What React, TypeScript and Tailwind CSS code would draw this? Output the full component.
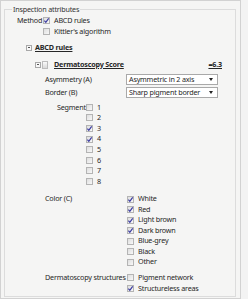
import React from "react";

const Check = ({ checked }: { checked?: boolean }) => (
  <span className="relative inline-block w-[7px] h-[7px] shrink-0 border border-[#b4b4b4] bg-gradient-to-br from-[#dedede] to-[#f8f8f8]">
    {checked && (
      <svg viewBox="0 0 7 7" className="absolute -left-[1px] -top-[1px] w-[7px] h-[7px]">
        <path d="M1.4 3.7 L2.8 5.3 L5.7 1.3" fill="none" stroke="#3a3aa0" strokeWidth="1.2" />
      </svg>
    )}
  </span>
);

const Expander = () => (
  <span className="relative inline-flex items-center justify-center w-[6px] h-[6px] border border-[#a8a8a8] bg-[#f7f7f7] shrink-0">
    <span className="block w-[2px] h-px bg-[#555]" />
  </span>
);

const CheckRow = ({ checked, label, h = "h-[10.5px]" }: { checked?: boolean; label: string; h?: string }) => (
  <div className={`flex items-center gap-[4px] ${h}`}>
    <Check checked={checked} />
    <span className="leading-none whitespace-nowrap">{label}</span>
  </div>
);

const Dropdown = ({ text }: { text: string }) => (
  <div className="flex items-center justify-between w-[92px] h-[11px] border border-[#a9a9a9] bg-white pl-[2px] pr-[4px]">
    <span className="leading-none whitespace-nowrap">{text}</span>
    <span className="block w-0 h-0 border-l-[2.5px] border-r-[2.5px] border-t-[3px] border-l-transparent border-r-transparent border-t-[#222]" />
  </div>
);

export default function App() {
  const segs = [
    { l: "1", c: false },
    { l: "2", c: false },
    { l: "3", c: true },
    { l: "4", c: true },
    { l: "5", c: false },
    { l: "6", c: false },
    { l: "7", c: false },
    { l: "8", c: false },
  ];
  const colors = [
    { l: "White", c: true },
    { l: "Red", c: true },
    { l: "Light brown", c: true },
    { l: "Dark brown", c: true },
    { l: "Blue-grey", c: false },
    { l: "Black", c: false },
    { l: "Other", c: false },
  ];
  return (
    <div
      className="w-[248px] h-[299px] overflow-hidden bg-[#f5f5f4] text-[#262626] text-[7.2px] tracking-[-0.2px] flex"
      style={{ fontFamily: '"Noto Sans", "Open Sans", sans-serif' }}
    >
      <div className="w-[241px] h-[299px] border border-[#d2d2d2] pl-[3px] pt-[2px]">
        <fieldset className="w-[232px] h-[294px] border border-[#dcdcdc] m-0 p-0 min-w-0">
          <legend className="ml-[7px] px-[1px] leading-[12px] text-[#333]">Inspection attributes</legend>

          <div className="flex pl-[12px]">
            <span className="w-[26px] h-[11px] flex items-center leading-none whitespace-nowrap">Method</span>
            <div className="flex flex-col">
              <CheckRow checked label="ABCD rules" h="h-[11px]" />
              <CheckRow label="Kittler's algorithm" h="h-[11px]" />
            </div>
          </div>

          <div className="flex items-center gap-[3px] pl-[21px] mt-[5px] h-[11px]">
            <Expander />
            <span className="font-bold underline leading-none">ABCD rules</span>
          </div>

          <div className="flex items-center pl-[30px] mt-[6px] h-[11px] w-[217px]">
            <Expander />
            <span className="ml-[1px] inline-block w-[6px] h-[8px] border border-[#bcbcbc] bg-gradient-to-b from-[#fafafa] to-[#d9d9d9]" />
            <span className="ml-[6px] font-bold underline leading-none">Dermatoscopy Score</span>
            <span className="ml-auto font-bold underline leading-none">=6.3</span>
          </div>

          <div className="pl-[40px] mt-[4px] flex flex-col gap-[2px]">
            <div className="flex items-center h-[11px]">
              <span className="w-[81px] leading-none">Asymmetry (A)</span>
              <Dropdown text="Asymmetric in 2 axis" />
            </div>
            <div className="flex items-center h-[11px]">
              <span className="w-[81px] leading-none">Border (B)</span>
              <Dropdown text="Sharp pigment border" />
            </div>
          </div>

          <div className="flex pl-[52px] mt-[4px]">
            <span className="w-[29px] h-[10.6px] flex items-center leading-none whitespace-nowrap">Segment</span>
            <div className="flex flex-col">
              {segs.map((s) => (
                <CheckRow key={s.l} checked={s.c} label={s.l} h="h-[10.6px]" />
              ))}
            </div>
          </div>

          <div className="flex pl-[40px] mt-[7px]">
            <span className="w-[82px] h-[10.5px] flex items-center leading-none">Color (C)</span>
            <div className="flex flex-col">
              {colors.map((s) => (
                <CheckRow key={s.l} checked={s.c} label={s.l} />
              ))}
            </div>
          </div>

          <div className="flex pl-[40px] mt-[5px]">
            <span className="w-[82px] h-[11px] flex items-center leading-none whitespace-nowrap">Dermatoscopy structures</span>
            <div className="flex flex-col">
              <CheckRow label="Pigment network" h="h-[11px]" />
              <CheckRow checked label="Structureless areas" h="h-[11px]" />
            </div>
          </div>
        </fieldset>
      </div>
      <div className="flex-1 bg-[#f3f3f3]" />
    </div>
  );
}
